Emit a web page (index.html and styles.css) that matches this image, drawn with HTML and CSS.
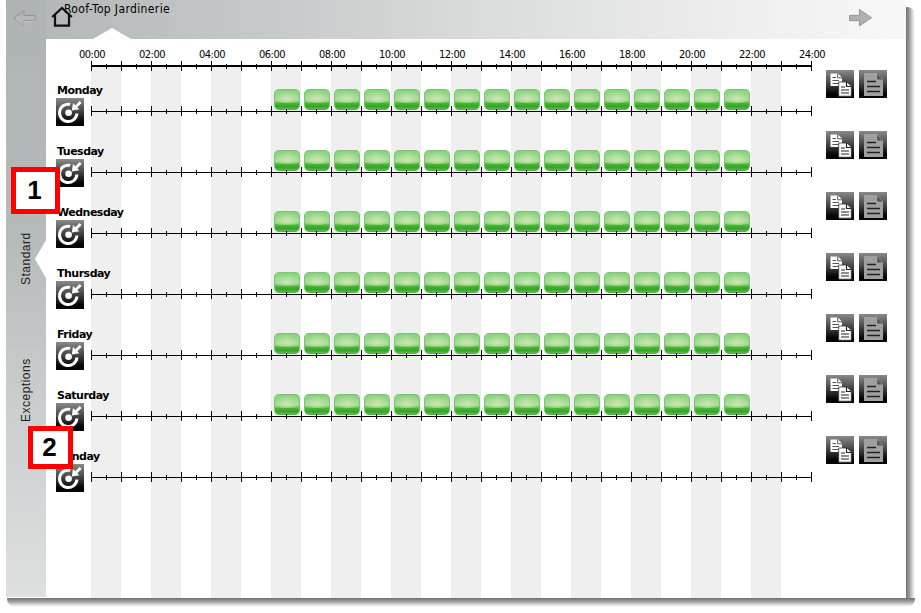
FILE: index.html
```
<!DOCTYPE html>
<html lang="en">
<head>
<meta charset="utf-8">
<title>Roof-Top Jardinerie</title>
<link rel="stylesheet" href="styles.css">
</head>
<body>
<svg class="defs" width="0" height="0" aria-hidden="true">
  <defs>
    <g id="target">
      <path d="M14.2 6.4A8.7 8.7 0 1 0 20.9 15.5" fill="none" stroke="#fff" stroke-width="3"/>
      <circle cx="12.6" cy="14.8" r="3.3" fill="#fff"/>
      <path d="M15.8 12.4L17 5L19.3 7.2L23.6 2.9L25.6 4.9L21.3 9.2L23.4 11.3Z" fill="#fff"/>
    </g>
    <g id="copy">
      <path d="M4.5 3.5H12L16 7.5V16H4.5Z" fill="#fff"/>
      <path d="M11.7 3.5V7.8H16M6.5 7.5H10M6.5 10.5H13M6.5 13.5H13" fill="none" stroke="#555"/>
      <path d="M12.7 12H21L25.3 16V26.2H12.7Z" fill="#fff" stroke="#333" stroke-width=".8"/>
      <path d="M20.5 12V16.5H25M15 17H19M15 20H23M15 23H23" fill="none" stroke="#222" stroke-width="1.2"/>
    </g>
    <g id="paste">
      <path d="M5 3H18L24 9.5V26H5Z" fill="#a0a0a0"/>
      <path d="M18.2 4V9.5H23.5Z" fill="#555"/>
      <path d="M8 11.5H17M8 16.5H21M8 21.5H21" stroke="#222" stroke-width="1.7"/>
    </g>
  </defs>
</svg>
<main class="window">
  <nav class="side">
    <svg class="back" width="24" height="18" viewBox="0 0 24 18"><path d="M1 9L11 1.5V6.5H22V11.5H11V16.5Z" fill="#b3b7b7" stroke="#909494"/><path d="M3 9.7L11.8 16.2V12.4H22.6" fill="none" stroke="#c8cbcb" stroke-width=".8"/></svg>
    <a class="tab standard">Standard</a>
    <a class="tab exceptions">Exceptions</a>
    <i class="side-notch"></i>
    <b class="marker one">1</b>
    <b class="marker two">2</b>
  </nav>
  <section class="content">
    <header class="top">
      <svg class="home" width="22" height="21" viewBox="0 0 22 21"><path d="M1.2 11L11 2L20.8 11M4 9V19.7H18V9" fill="none" stroke="#111" stroke-width="2.2"/></svg>
      <span class="title">Roof-Top Jardinerie</span>
      <svg class="next" width="25" height="20" viewBox="0 0 25 20"><path d="M1.5 7.3H11.5V1.5L23.5 9.7L11.5 17.9V12.7H1.5Z" fill="#b0b0b0" stroke="#969696"/></svg>
      <i class="top-notch"></i>
    </header>
    <div class="schedule">
      <div class="hours" id="hours"></div>
      <div id="days"></div>
    </div>
  </section>
</main>
<script src="app.js"></script>
</body>
</html>
```
FILE: styles.css
```
* { box-sizing: border-box; }
body { margin: 0; width: 921px; height: 613px; overflow: hidden; background: #fff; color: #000; font-family: "DejaVu Sans", sans-serif; }
svg { display: block; flex: none; }
.defs { position: absolute; }
.window { position: relative; display: flex; width: 900px; height: 598px; margin-left: 6px; background: #fff; }
.window::before { content: ""; position: absolute; left: 900px; top: 7px; width: 9px; height: 591px; background: linear-gradient(90deg, #707070, #999 35%, #dcdcdc 75%, #fff); border-top-right-radius: 8px; }
.window::after { content: ""; position: absolute; left: 1px; top: 598px; width: 908px; height: 9px; background: linear-gradient(#707070, #999 35%, #dcdcdc 75%, #fff); border-radius: 0 0 8px 8px; }
.side { position: relative; width: 40px; height: 597px; flex: none; display: flex; flex-direction: column; align-items: center; background: linear-gradient(#aeb3b3, #b5baba 40%, #c8cccc 65%, #dde0df); }
.back { margin: 9px 3px 0 0; }
.tab { writing-mode: vertical-rl; transform: rotate(180deg); font: 12px/14px "Liberation Sans", sans-serif; color: #222; text-align: center; letter-spacing: .5px; }
.standard { margin-top: 201px; height: 62px; }
.exceptions { margin-top: 64px; height: 72px; }
.side-notch { position: absolute; right: 0; top: 240px; width: 11px; height: 38px; background: #fff; clip-path: polygon(100% 0, 0 50%, 100% 100%); }
.marker { position: absolute; z-index: 2; display: flex; align-items: center; justify-content: center; border: 5px solid #f00; background: #fff; font: bold 26px/1 "Liberation Sans", sans-serif; }
.one { left: 5px; top: 167px; width: 49px; height: 47px; padding: 0 2px 2px 0; }
.two { left: 22px; top: 426px; width: 45px; height: 43px; padding: 0 2px 2px 0; }
.content { flex: 1; min-width: 0; }
.top { position: relative; height: 39px; display: flex; background: linear-gradient(90deg, #b4b8b8, #c6c9c9 25%, #dadbdb 50%, #ebebeb 75%, #f8f8f8); }
.home { margin: 6px 0 0 5px; }
.title { margin: 2px 0 0 -9px; font: 12px/14px "DejaVu Sans Condensed", "DejaVu Sans", sans-serif; font-stretch: condensed; letter-spacing: .37px; white-space: nowrap; }
.next { margin: 8px 33px 0 auto; }
.top-notch { position: absolute; left: 47px; bottom: 0; width: 38px; height: 11px; background: #fff; clip-path: polygon(0 100%, 50% 0, 100% 100%); }
.schedule { height: 559px; padding-left: 10px; background: repeating-linear-gradient(90deg, #efefef 0 30px, #fff 30px 60px) 45px 28px / 720px 531px no-repeat; }
.hours { height: 31px; padding: 9px 0 0 20px; }
.hour-labels { display: flex; height: 13px; }
.hour-labels span { width: 60px; flex: none; padding-left: 3px; font: 11px/13px "DejaVu Sans Condensed", "DejaVu Sans", sans-serif; font-stretch: condensed; letter-spacing: -.5px; }
.hours .axis { margin-left: 15px; }
.row { display: flex; height: 61px; }
.day { width: 35px; padding-top: 13px; flex: none; }
.day-name { display: block; height: 15px; padding-left: 1px; font: bold 11px/15px "DejaVu Sans", sans-serif; letter-spacing: -.5px; white-space: nowrap; }
.button { width: 28px; height: 28px; background: linear-gradient(#8a8a8a, #484848 45%, #050505 85%); flex: none; }
.line { width: 735px; padding-top: 19px; flex: none; }
.slots { display: flex; gap: 4px; height: 17px; padding-left: 183px; }
.slots i { width: 26px; height: 21px; flex: none; border: 1px solid #7fc275; border-bottom-color: #58ad4b; border-radius: 5px; background: radial-gradient(ellipse at 50% 70%, rgba(225,236,190,.65), transparent 70%) 0 0 / 100% 13px no-repeat, linear-gradient(#86d27e 0, #a5dc96 50%, #8fd080 60%, #4db53d 68%, #2fa622 88%, #63bb50); }
.actions { display: flex; gap: 5px; }
```
FILE: app.js
```
// Builds a 24-hour ruler with long ticks on hours and short ones on half hours.
function axis(weight) {
  let ticks = "";
  for (let n = 0; n <= 48; n++) {
    const x = n * 15 + 0.5;
    ticks += n % 2 ? `M${x} 3V8` : `M${x} 0V10`;
  }
  const y = weight === 2 ? 5 : 5.5;
  return `<svg class="axis" width="722" height="11"><path d="M0 ${y}H721" stroke="#000" stroke-width="${weight}"/><path d="${ticks}" stroke="#000"/></svg>`;
}
const icon = name => `<svg class="button" viewBox="0 0 28 28"><use href="#${name}"/></svg>`;

let labels = "";
for (let h = 0; h <= 24; h += 2) labels += `<span>${String(h).padStart(2, "0")}:00</span>`;
document.getElementById("hours").innerHTML = `<div class="hour-labels">${labels}</div>${axis(2)}`;

const days = ["Monday", "Tuesday", "Wednesday", "Thursday", "Friday", "Saturday", "Sunday"];
document.getElementById("days").innerHTML = days.map(day => {
  const slots = day === "Sunday" ? "" : "<i></i>".repeat(16);
  return `<div class="row">
    <div class="day"><span class="day-name">${day}</span>${icon("target")}</div>
    <div class="line"><div class="slots">${slots}</div>${axis(1)}</div>
    <div class="actions">${icon("copy")}${icon("paste")}</div>
  </div>`;
}).join("");
```
